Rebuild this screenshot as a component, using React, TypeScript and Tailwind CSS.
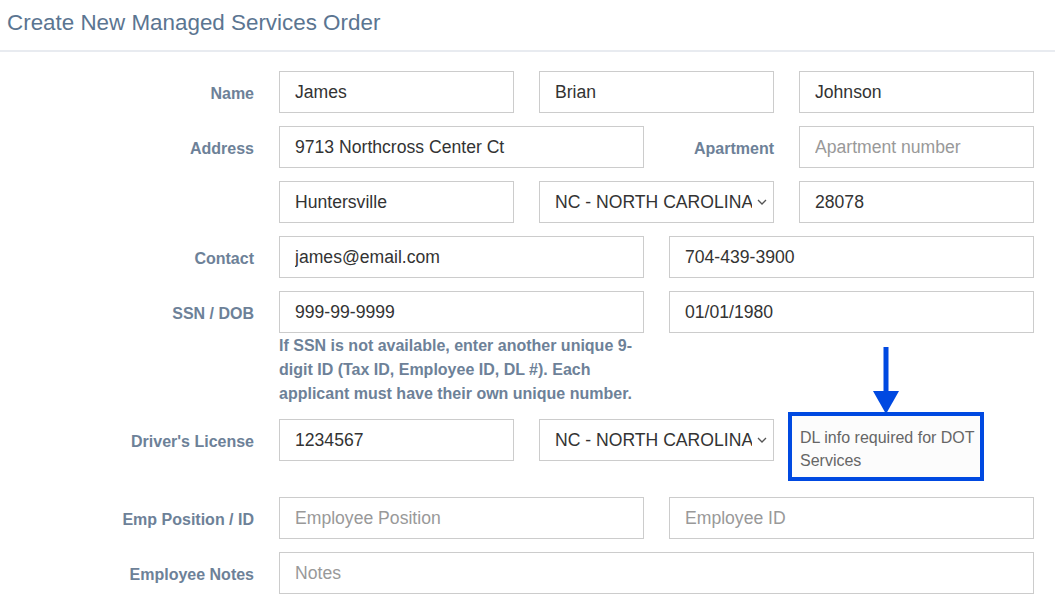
import React from "react";

const font = { fontFamily: '"Liberation Sans", Arial, sans-serif' };

const Label = ({ children }: { children: React.ReactNode }) => (
  <div className="w-[254px] h-[42px] shrink-0 flex items-center justify-end pt-[4px] text-[16px] font-bold text-[#6d8198]">
    {children}
  </div>
);

const Input = ({ value, placeholder }: { value?: string; placeholder?: string }) => (
  <input
    readOnly
    value={value ?? ""}
    placeholder={placeholder}
    className="w-full h-[42px] border border-[#cccccc] bg-white pl-[15px] pr-2 text-[17.6px] text-[#333333] placeholder:text-[#999999] outline-none"
  />
);

const Select = ({ value }: { value: string }) => (
  <div className="w-full h-[42px] border border-[#cccccc] bg-white pl-[15px] pr-[6px] flex items-center justify-between text-[17.6px] text-[#333333]">
    <span className="whitespace-nowrap overflow-hidden">{value}</span>
    <svg width="10" height="6" viewBox="0 0 10 6" className="shrink-0 ml-[5px]">
      <polyline points="1,1 5,5 9,1" fill="none" stroke="#555" strokeWidth="1.3" />
    </svg>
  </div>
);

export default function App() {
  return (
    <div className="w-[1055px] h-[612px] bg-white overflow-hidden" style={font}>
      {/* header */}
      <div className="h-[52px] border-b-2 border-[#e8ebf0] pl-[7px] pt-[9px]">
        <h1 className="text-[22.4px] leading-[28px] text-[#5b7591]">Create New Managed Services Order</h1>
      </div>

      <div className="mt-[19px] flex flex-col">
        {/* Name */}
        <div className="flex items-start mb-[13px]">
          <Label>Name</Label>
          <div className="ml-[25px] w-[755px] grid grid-cols-3 gap-x-[25px]">
            <Input value="James" />
            <Input value="Brian" />
            <Input value="Johnson" />
          </div>
        </div>

        {/* Address */}
        <div className="flex items-start mb-[13px]">
          <Label>Address</Label>
          <div className="ml-[25px] w-[755px] grid grid-cols-2 gap-x-[25px]">
            <Input value="9713 Northcross Center Ct" />
            <div className="flex items-center">
              <div className="flex-1 text-right pt-[4px] text-[16px] font-bold text-[#6d8198]">Apartment</div>
              <div className="w-[235px] ml-[25px]">
                <Input placeholder="Apartment number" />
              </div>
            </div>
          </div>
        </div>

        {/* City / State / Zip */}
        <div className="flex items-start mb-[13px]">
          <div className="w-[254px] shrink-0" />
          <div className="ml-[25px] w-[755px] grid grid-cols-3 gap-x-[25px]">
            <Input value="Huntersville" />
            <Select value="NC - NORTH CAROLINA" />
            <Input value="28078" />
          </div>
        </div>

        {/* Contact */}
        <div className="flex items-start mb-[13px]">
          <Label>Contact</Label>
          <div className="ml-[25px] w-[755px] grid grid-cols-2 gap-x-[25px]">
            <Input value="james@email.com" />
            <Input value="704-439-3900" />
          </div>
        </div>

        {/* SSN / DOB */}
        <div className="flex items-start mb-[13px]">
          <Label>SSN / DOB</Label>
          <div className="ml-[25px] w-[755px] grid grid-cols-2 gap-x-[25px]">
            <div>
              <Input value="999-99-9999" />
              <p className="mt-[1px] pr-[4px] text-[16px] leading-[24px] font-bold text-[#6d8198]">
                If SSN is not available, enter another unique 9-digit ID (Tax ID, Employee ID, DL #). Each applicant must have their own unique number.
              </p>
            </div>
            <Input value="01/01/1980" />
          </div>
        </div>

        {/* Driver's License */}
        <div className="flex items-start mb-[16px]">
          <Label>Driver's License</Label>
          <div className="ml-[25px] w-[755px] grid grid-cols-3 gap-x-[25px] items-start">
            <Input value="1234567" />
            <Select value="NC - NORTH CAROLINA" />
            <div className="relative -ml-[11px] -mt-[7px] w-[196px] h-[69px] border-4 border-[#0049e1] bg-[#fcfcfc] pl-[8px] pt-[10px] text-[16px] leading-[23px] text-[#666666]">
              DL info required for DOT Services
              <svg
                width="26"
                height="67"
                viewBox="0 0 26 67"
                className="absolute left-[81px] -top-[69px]"
              >
                <rect x="10.5" y="0" width="5" height="46" fill="#0049e1" />
                <polygon points="0,44 26,44 13,67" fill="#0049e1" />
              </svg>
            </div>
          </div>
        </div>

        {/* Emp Position / ID */}
        <div className="flex items-start mb-[13px]">
          <Label>Emp Position / ID</Label>
          <div className="ml-[25px] w-[755px] grid grid-cols-2 gap-x-[25px]">
            <Input placeholder="Employee Position" />
            <Input placeholder="Employee ID" />
          </div>
        </div>

        {/* Employee Notes */}
        <div className="flex items-start">
          <Label>Employee Notes</Label>
          <div className="ml-[25px] w-[755px]">
            <Input placeholder="Notes" />
          </div>
        </div>
      </div>
    </div>
  );
}
